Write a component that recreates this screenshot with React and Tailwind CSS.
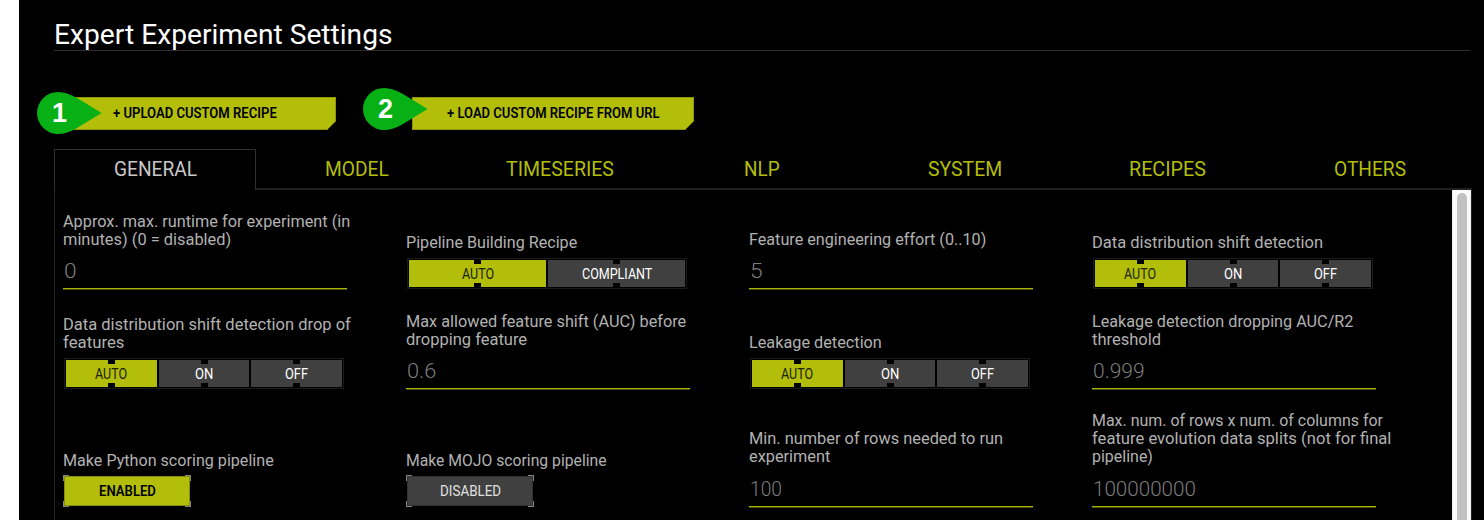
import { useLayoutEffect, useRef, useState } from "react";

// Single line of text, condensed or stretched horizontally to a given width.
function Fit({ w, children, className = "" }) {
  const ref = useRef(null);
  const [scale, setScale] = useState(1);
  useLayoutEffect(() => {
    setScale(w / ref.current.offsetWidth);
  }, [w, children]);
  return (
    <span className={`block shrink-0 whitespace-nowrap ${className}`} style={{ width: w }}>
      <span ref={ref} className="inline-block origin-left align-top" style={{ transform: `scaleX(${scale})` }}>
        {children}
      </span>
    </span>
  );
}

function Label({ lines }) {
  return (
    <div className="text-[16.5px] leading-[18px] text-[#b2b2b2]">
      {lines.map(([text, w]) => (
        <Fit key={text} w={w}>{text}</Fit>
      ))}
    </div>
  );
}

function Field({ lines, value, w, gap = "mt-[7px]" }) {
  return (
    <div className="flex h-full w-full flex-col justify-end">
      <Label lines={lines} />
      <div className={`mb-[2px] ${gap} flex h-[30px] w-[284px] items-center pl-px text-[21px] font-light leading-[30px] text-[#7d7d7d]`}>
        <Fit w={w}>{value}</Fit>
      </div>
      <div className="h-px w-[284px] bg-[#a9b40a]" />
      <div className="h-px w-[284px] bg-[#4b5006]" />
    </div>
  );
}

function Toggle({ lines, options }) {
  return (
    <div className="flex h-full w-full flex-col justify-end">
      <Label lines={lines} />
      <div className="mb-px ml-px mt-[6px] flex h-[31px] w-[280px] gap-[2px] border border-[#1a1a1a] px-px py-px">
        {options.map(([text, w], i) => (
          <div
            key={text}
            className={`flex flex-1 flex-col items-center justify-between ${
              i === 0 ? "bg-[#b3be0b] text-[#20220a]" : "bg-[#404040] text-white"
            }`}
          >
            <span className="h-1 w-[7px] bg-black" />
            <Fit w={w} className="text-[14.5px] leading-[19px] pt-px -mb-px">{text}</Fit>
            <span className="h-1 w-[7px] bg-black" />
          </div>
        ))}
      </div>
    </div>
  );
}

function Switch({ lines, on, text, w }) {
  return (
    <div className="flex h-full w-full flex-col justify-end">
      <Label lines={lines} />
      <div className="relative mb-px mt-[5px] h-8 w-32 p-px">
        <span className="absolute left-0 top-0 size-[6px] border-l border-t border-[#858585]" />
        <span className="absolute right-0 top-0 size-[6px] border-r border-t border-[#858585]" />
        <span className="absolute bottom-0 left-0 size-[6px] border-b border-l border-[#858585]" />
        <span className="absolute bottom-0 right-0 size-[6px] border-b border-r border-[#858585]" />
        <div
          className={`flex h-full items-center justify-center border pt-[2px] ${
            on
              ? "border-[#858d10] bg-[#b3be0b] font-semibold text-black"
              : "border-[#323232] bg-[#404040] text-[#e0e0e0]"
          }`}
        >
          <Fit w={w} className="text-[14.5px] leading-[18px]">{text}</Fit>
        </div>
      </div>
    </div>
  );
}

function Pin({ n, className }) {
  return (
    <div className={`absolute h-[42px] w-[65px] ${className}`}>
      <svg width="65" height="42" viewBox="0 0 65 42" className="block">
        <path d="M64.5 21 L40 6 C33 2 27 0 21 0 A21 21 0 0 0 21 42 C27 42 33 40 40 36 Z" fill="#07b014" />
      </svg>
      <span className="absolute left-0 top-0 w-[46px] text-center font-['Liberation_Sans',sans-serif] text-[27px] font-bold leading-[43px] text-white">
        {n}
      </span>
    </div>
  );
}

function Action({ children, w }) {
  return (
    <button className="flex h-[33px] w-[282px] items-center justify-center border border-[#8f9809] bg-[#b3be0b] font-semibold text-black [clip-path:polygon(0_0,100%_0,100%_24px,273px_100%,0_100%)]">
      <Fit w={w} className="text-left text-[14.5px] leading-[20px]">{children}</Fit>
    </button>
  );
}

const tabs = [
  ["GENERAL", 83],
  ["MODEL", 64],
  ["TIMESERIES", 108],
  ["NLP", 36],
  ["SYSTEM", 74],
  ["RECIPES", 77],
  ["OTHERS", 72],
];

const triple = [["AUTO", 32], ["ON", 18], ["OFF", 23]];

export default function App() {
  return (
    <div className="h-[520px] w-[1484px] overflow-hidden bg-white pl-[19px] font-[Roboto,sans-serif]">
      <div className="flex h-[520px] flex-col bg-black pl-[35px]">
        <h1 className="h-[51px] w-[1416px] shrink-0 border-b border-[#2e2e2e] pt-[15px] text-[28px] leading-[40px] text-white">
          <Fit w={339}>Expert Experiment Settings</Fit>
        </h1>

        <div className="mt-[46px] flex shrink-0 gap-[76px]">
          <div className="relative">
            <Action w={164}>+ UPLOAD CUSTOM RECIPE</Action>
            <Pin n="1" className="-left-[17.5px] -top-[5px]" />
          </div>
          <div className="relative">
            <Action w={213}>+ LOAD CUSTOM RECIPE FROM URL</Action>
            <Pin n="2" className="-left-[49.5px] -top-[9px]" />
          </div>
        </div>

        <div className="mt-[19px] flex h-[41px] w-[1418px] shrink-0">
          {tabs.map(([text, w], i) => (
            <div
              key={text}
              className={`flex shrink-0 justify-center text-[21px] ${
                i === 0
                  ? "w-[202px] border-x border-t border-[#303030] leading-[38px] text-[#c8c8c8]"
                  : "w-[202.5px] border-b-2 border-[#202020] leading-[40px] text-[#b3be0b]"
              }`}
            >
              <Fit w={w}>{text}</Fit>
            </div>
          ))}
          <div className="flex-1 border-b-2 border-[#202020]" />
        </div>

        <div className="flex h-[330px] w-[1418px] shrink-0 justify-between overflow-hidden border-x border-[#252525]">
          <div className="grid grid-cols-[343px_343px_343px_343px] grid-rows-[100px_100px_118px] pl-2">
            <Field lines={[["Approx. max. runtime for experiment (in", 287], ["minutes) (0 = disabled)", 168]]} value="0" w={13} />
            <Toggle lines={[["Pipeline Building Recipe", 171]]} options={[["AUTO", 32], ["COMPLIANT", 70]]} />
            <Field lines={[["Feature engineering effort (0..10)", 237]]} value="5" w={13} />
            <Toggle lines={[["Data distribution shift detection", 231]]} options={triple} />

            <Toggle lines={[["Data distribution shift detection drop of", 288], ["features", 61]]} options={triple} />
            <Field lines={[["Max allowed feature shift (AUC) before", 280], ["dropping feature", 121]]} value="0.6" w={29} />
            <Toggle lines={[["Leakage detection", 133]]} options={triple} />
            <Field lines={[["Leakage detection dropping AUC/R2", 261], ["threshold", 69]]} value="0.999" w={52} />

            <Switch lines={[["Make Python scoring pipeline", 211]]} on text="ENABLED" w={57} />
            <Switch lines={[["Make MOJO scoring pipeline", 201]]} text="DISABLED" w={61} />
            <Field gap="mt-[8px]" lines={[["Min. number of rows needed to run", 254], ["experiment", 81]]} value="100" w={32} />
            <Field
              gap="mt-[8px]"
              lines={[
                ["Max. num. of rows x num. of columns for", 291],
                ["feature evolution data splits (not for final", 299],
                ["pipeline)", 61],
              ]}
              value="100000000"
              w={103}
            />
          </div>
          <div className="flex w-[19px] shrink-0 justify-center border-x border-[#ededed] bg-[#fafafa] pt-[3px]">
            <div className="w-[10px] rounded-t-full bg-[#c1c1c1]" />
          </div>
        </div>
      </div>
    </div>
  );
}
